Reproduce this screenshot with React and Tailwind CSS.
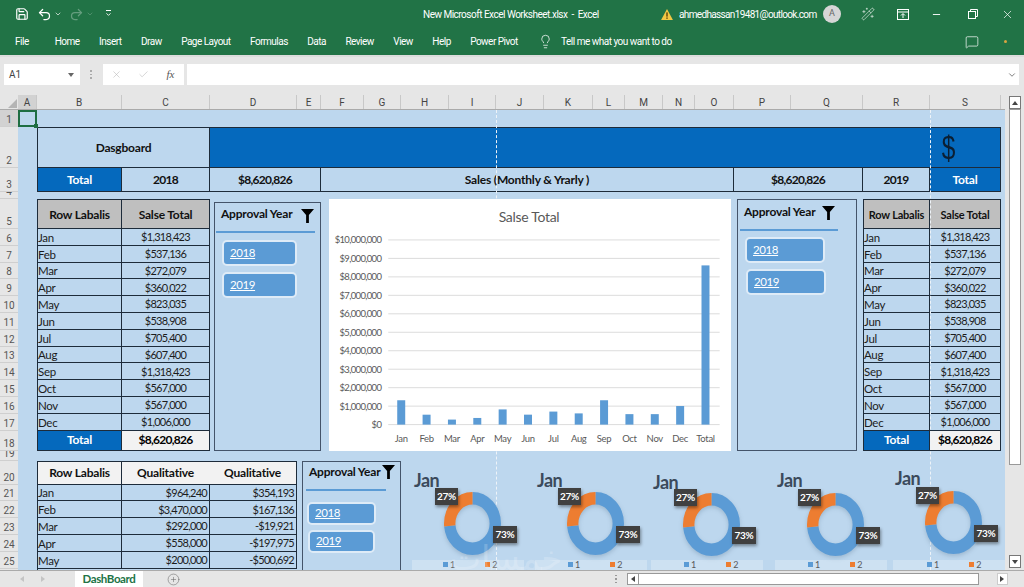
import React from 'react';
import { Save, Undo2, Redo2, ChevronDown, X, Check, Lightbulb, MessageSquare, Minus, CirclePlus, WandSparkles } from 'lucide-react';

const colHeaders = [
  { n: 'A', w: 'w-[19px]', active: true },
  { n: 'B', w: 'w-[85px]' },
  { n: 'C', w: 'w-[88px]' },
  { n: 'D', w: 'w-[87px]' },
  { n: 'E', w: 'w-[24px]' },
  { n: 'F', w: 'w-[43px]' },
  { n: 'G', w: 'w-[37px]' },
  { n: 'H', w: 'w-[48px]' },
  { n: 'I', w: 'w-[47px]' },
  { n: 'J', w: 'w-[48px]' },
  { n: 'K', w: 'w-[49px]' },
  { n: 'L', w: 'w-[32px]' },
  { n: 'M', w: 'w-[38px]' },
  { n: 'N', w: 'w-[32px]' },
  { n: 'O', w: 'w-[39px]' },
  { n: 'P', w: 'w-[57px]' },
  { n: 'Q', w: 'w-[72px]' },
  { n: 'R', w: 'w-[67px]' },
  { n: 'S', w: 'w-[71px]' },
];

const rowHeaders = [
  { n: 1, h: 'h-[17px]', active: true },
  { n: 2, h: 'h-[41px]' },
  { n: 3, h: 'h-[24px]' },
  { n: 4, h: 'h-[7px]' },
  { n: 5, h: 'h-[30px]' },
  ...[6, 7, 8, 9, 10, 11, 12, 13, 14, 15, 16, 17].map((n) => ({ n, h: 'h-[16.8px]' })),
  { n: 18, h: 'h-[20px]' },
  { n: 19, h: 'h-[10px]' },
  { n: 20, h: 'h-[24px]' },
  ...[21, 22, 23, 24, 25].map((n) => ({ n, h: 'h-[16.8px]' })),
];

const sales = [
  ['Jan', '$1,318,423', 1318423],
  ['Feb', '$537,136', 537136],
  ['Mar', '$272,079', 272079],
  ['Apr', '$360,022', 360022],
  ['May', '$823,035', 823035],
  ['Jun', '$538,908', 538908],
  ['Jul', '$705,400', 705400],
  ['Aug', '$607,400', 607400],
  ['Sep', '$1,318,423', 1318423],
  ['Oct', '$567,000', 567000],
  ['Nov', '$567,000', 567000],
  ['Dec', '$1,006,000', 1006000],
];

const qualitative = [
  ['Jan', '$964,240', '$354,193'],
  ['Feb', '$3,470,000', '$167,136'],
  ['Mar', '$292,000', '-$19,921'],
  ['Apr', '$558,000', '-$197,975'],
  ['May', '$200,000', '-$500,692'],
];

const donuts = [
  { ml: 'ml-[11px]', title: 'mt-[9px]', top: 'mt-[2px]', legend: 'pl-[31px]' },
  { ml: 'ml-[11px]', title: 'mt-[9px]', top: 'mt-[2px]', legend: 'pl-[33px]' },
  { ml: 'ml-[4px]', title: 'mt-[11px]', top: 'mt-[1px]', legend: 'pl-[33px]' },
  { ml: 'ml-[12px]', title: 'mt-[9px]', top: 'mt-[3px]', legend: 'pl-[33px]' },
  { ml: 'ml-[6px]', title: 'mt-[7px]', top: 'mt-[3px]', legend: 'pl-[34px]' },
];

const cellBorder = 'border-b-[1.5px] border-r-[1.5px] border-[#1d2b3a]';
const monthFont = "pt-px font-['Lato'] text-[11.5px] tracking-[-0.3px] text-[#1c1c1c]";
const numFont = "pt-px font-['Lato'] text-[11px] tracking-[-0.72px] text-[#1c1c1c]";
const headFont = "font-['Lato'] font-bold text-[12px] tracking-[-0.2px] text-[#111]";
const headNum = "font-['Lato'] font-bold text-[12px] tracking-[-0.75px] text-[#111]";

function Funnel({ className }) {
  return (
    <svg viewBox="0 0 14 15" className={className}>
      <polygon points="0,0 14,0 8.5,6.5 8.5,15 5.5,15 5.5,6.5" fill="#000" />
    </svg>
  );
}

function SlicerButton({ label, className }) {
  return (
    <div className={`flex items-center rounded-[5px] border-2 border-[#deebf7] bg-[#5b9bd5] pl-[6px] font-['Lato'] text-[11.5px] tracking-[-0.4px] text-white underline ${className}`}>
      {label}
    </div>
  );
}

function Donut({ ml, title, top, legend }) {
  return (
    <div className={`flex h-[109px] w-[112px] shrink-0 flex-col ${ml}`}>
      <div className={`ml-[2px] h-[20px] font-['Lato'] text-[18px] font-bold leading-[20px] tracking-[-0.5px] text-[#3b4a5c] ${title}`}>Jan</div>
      <div className={`relative ml-[32px] h-[63px] w-[57px] ${top}`}>
        <svg viewBox="0 0 100 100" preserveAspectRatio="none" className="h-full w-full drop-shadow-[0_2px_2px_rgba(60,90,120,0.25)]">
          <g transform="rotate(-90 50 50)">
            <circle cx="50" cy="50" r="40" fill="none" stroke="#5b9bd5" strokeWidth="20" pathLength="100" strokeDasharray="73 27" />
            <circle cx="50" cy="50" r="40" fill="none" stroke="#ed7d31" strokeWidth="20" pathLength="100" strokeDasharray="27 73" strokeDashoffset="-73" />
          </g>
        </svg>
        <div className="absolute left-[-9px] top-[-4px] flex h-[17px] w-[23px] items-center justify-center bg-[#404040] font-['Lato'] text-[10px] font-bold tracking-[-0.3px] text-white shadow-[1px_2px_3px_rgba(0,0,0,0.4)]">27%</div>
        <div className="absolute left-[49px] top-[34px] flex h-[17px] w-[24px] items-center justify-center bg-[#404040] font-['Lato'] text-[10px] font-bold tracking-[-0.3px] text-white shadow-[1px_2px_3px_rgba(0,0,0,0.4)]">73%</div>
      </div>
      <div className={`mt-auto flex h-[10px] items-center bg-white/25 font-['Lato'] text-[9px] text-[#595959] ${legend}`}>
        <span className="h-[5px] w-[5px] bg-[#5b9bd5]" />
        <span className="ml-[2px]">1</span>
        <span className="ml-[30px] h-[5px] w-[5px] bg-[#ed7d31]" />
        <span className="ml-[2px]">2</span>
      </div>
    </div>
  );
}

function SalesChart() {
  const x0 = 59;
  const yOf = (v) => 226 - (v / 10000000) * 185;
  const bars = [...sales, ['Total', '', 8620826]];
  return (
    <svg viewBox="0 0 402 252" className="h-full w-full" fontFamily="Lato">
      <text x="200" y="23" textAnchor="middle" fontSize="14" fill="#595959" letterSpacing="-0.3">Salse Total</text>
      {[10, 9, 8, 7, 6, 5, 4, 3, 2, 1, 0].map((m) => (
        <g key={m}>
          <line x1={x0} x2="391" y1={yOf(m * 1000000)} y2={yOf(m * 1000000)} stroke="#dcdcdc" />
          <text x="52" y={yOf(m * 1000000) + 3.5} textAnchor="end" fontSize="9.5" fill="#595959" letterSpacing="-0.65">
            {m === 0 ? '$0' : `$${m === 10 ? '10' : m},000,000`}
          </text>
        </g>
      ))}
      {bars.map(([label, , v], i) => (
        <g key={label}>
          <rect x={68 + i * 25.4} y={yOf(v)} width="8" height={226 - yOf(v)} fill="#5b9bd5" />
          <text x={72 + i * 25.4} y="243" textAnchor="middle" fontSize="9.5" fill="#595959" letterSpacing="-0.3">{label}</text>
        </g>
      ))}
    </svg>
  );
}

export default function App() {
  return (
    <div className="flex h-[587px] w-[1024px] flex-col overflow-hidden whitespace-nowrap bg-[#e6e6e6] font-['Roboto',sans-serif]">
      {/* title bar + ribbon tabs */}
      <div className="h-[55px] shrink-0 bg-[#217346] text-white">
        <div className="flex h-[28px] items-center text-[10px]">
          <div className="flex w-[423px] shrink-0 items-center">
            <Save size={14} className="ml-[15px]" />
            <Undo2 size={15} className="ml-[8px]" />
            <ChevronDown size={8} className="ml-[2px]" />
            <Redo2 size={15} className="ml-[7px] opacity-30" />
            <ChevronDown size={8} className="ml-[2px] opacity-30" />
            <div className="ml-[11px] flex flex-col items-center">
              <span className="h-px w-[5px] bg-white" />
              <ChevronDown size={7} strokeWidth={3} />
            </div>
          </div>
          <span className="w-[175px] shrink-0 tracking-[-0.5px]">New Microsoft Excel Worksheet.xlsx&nbsp; -&nbsp; Excel</span>
          <svg viewBox="0 0 14 13" className="ml-[63px] h-[11px] w-[12px] shrink-0">
            <polygon points="7,0 14,13 0,13" fill="#f2c744" />
            <rect x="6.2" y="4" width="1.6" height="5" fill="#5a3b00" />
            <rect x="6.2" y="10" width="1.6" height="1.6" fill="#5a3b00" />
          </svg>
          <span className="ml-[6px] w-[136px] shrink-0 text-[10px] tracking-[-0.65px]">ahmedhassan19481@outlook.com</span>
          <div className="ml-[8px] flex h-[18px] w-[18px] shrink-0 items-center justify-center rounded-full bg-[#d6d6d6] text-[9px] text-[#666]">A</div>
          <WandSparkles size={14} strokeWidth={1} className="ml-[20px] shrink-0" />
          <svg viewBox="0 0 12 11" className="ml-[22px] h-[11px] w-[12px] shrink-0" fill="none" stroke="#fff">
            <rect x="0.5" y="0.5" width="11" height="10" />
            <path d="M0.5 3h11M6 9V5M4 6.5L6 4.5L8 6.5" />
          </svg>
          <Minus size={11} className="ml-[22px] shrink-0" />
          <svg viewBox="0 0 10 10" className="ml-[26px] h-[10px] w-[10px] shrink-0" fill="none" stroke="#fff">
            <rect x="0.5" y="2.5" width="7" height="7" />
            <path d="M2.5 2.5V0.5H9.5V7.5H7.5" />
          </svg>
          <X size={13} strokeWidth={1.3} className="ml-[23px] shrink-0" />
        </div>
        <div className="flex h-[27px] items-center pl-[15px] text-[10px] tracking-[-0.5px]">
          <div className="flex w-[508px] shrink-0 items-center">
            <span className="mr-[26px]">File</span>
            <div className="flex items-center gap-[19.4px]">
              <span>Home</span>
              <span>Insert</span>
              <span>Draw</span>
              <span>Page Layout</span>
              <span>Formulas</span>
              <span>Data</span>
              <span>Review</span>
              <span>View</span>
              <span>Help</span>
              <span>Power Pivot</span>
            </div>
          </div>
          <Lightbulb size={15} strokeWidth={1.2} className="ml-[15px] shrink-0" />
          <span className="ml-[8px] w-[112px] shrink-0">Tell me what you want to do</span>
          <MessageSquare size={14} strokeWidth={1.2} className="ml-[292px] shrink-0" />
          <span className="ml-[25px] h-[3px] w-[3px] shrink-0 rounded-full bg-[#d9a441]" />
        </div>
      </div>

      {/* formula bar */}
      <div className="flex h-[40px] shrink-0 items-start border-t-2 border-[#dcdcdc] pl-[4px] pt-[7px]">
        <div className="flex h-[21px] w-[76px] items-center justify-between bg-white pl-[5px] pr-[6px] text-[10px] text-[#444]">
          A1
          <svg viewBox="0 0 6 4" className="h-[4px] w-[6px]"><polygon points="0,0 6,0 3,4" fill="#666" /></svg>
        </div>
        <div className="ml-[10px] mt-[6px] flex flex-col gap-[2px]">
          <span className="h-[1.5px] w-[1.5px] bg-[#aaa]" />
          <span className="h-[1.5px] w-[1.5px] bg-[#aaa]" />
          <span className="h-[1.5px] w-[1.5px] bg-[#aaa]" />
        </div>
        <div className="ml-[11px] flex h-[21px] w-[81px] items-center bg-white pl-[8px] text-[#b5b5b5]">
          <X size={11} strokeWidth={1.2} />
          <Check size={11} strokeWidth={1.2} className="ml-[16px]" />
          <span className="ml-[18px] font-['Liberation_Serif'] text-[11px] italic text-[#555]">fx</span>
        </div>
        <div className="ml-[3px] flex h-[21px] w-[832px] items-center justify-end bg-white pr-[2px]">
          <ChevronDown size={10} strokeWidth={2} className="text-[#666]" />
        </div>
      </div>

      {/* worksheet */}
      <div className="flex h-[475px] shrink-0">
        <div className="flex w-[1005px] flex-col overflow-hidden">
          <div className="flex h-[15px] shrink-0 border-b border-[#aaa] text-[10px] text-[#444]">
            <div className="flex w-[18px] items-end justify-end pb-px pr-px">
              <svg viewBox="0 0 9 9" className="h-[9px] w-[9px]"><polygon points="9,0 9,9 0,9" fill="#b4b4b4" /></svg>
            </div>
            {colHeaders.map((c) => (
              <div key={c.n} className={`flex items-center justify-center border-r border-[#c8c8c8] ${c.w} ${c.active ? 'bg-[#d2d2d2]' : ''}`}>{c.n}</div>
            ))}
          </div>
          <div className="relative flex min-h-0 flex-1">
            <div className="w-[18px] shrink-0 text-[10px] text-[#555]">
              {rowHeaders.map((r) => (
                <div key={r.n} className={`flex items-end justify-center overflow-hidden border-b border-[#cfcfcf] leading-[12px] ${r.h} ${r.active ? 'bg-[#d2d2d2]' : ''}`}>{r.n}</div>
              ))}
            </div>

            {/* sheet body: one grid whose tracks are the Excel columns and rows */}
            <div className="relative grid h-[460px] w-[987px] grid-cols-[19px_85px_88px_87px_24px_43px_37px_48px_47px_48px_49px_32px_38px_32px_39px_57px_72px_67px_71px_4px] grid-rows-[17px_41px_24px_7px_30px_repeat(12,16.8px)_20px_10px_24px_repeat(6,16.8px)] overflow-hidden bg-[#bdd7ee]">
              <div className="relative col-[1/2] row-[1/2] z-10 border-2 border-[#1f6e43] bg-[#bdd7ee]">
                <span className="absolute -bottom-[3px] -right-[3px] h-[4px] w-[4px] bg-[#1f6e43]" />
              </div>

              {/* page break lines */}
              <div className="pointer-events-none absolute bottom-0 left-[478px] top-0 z-[5] border-l border-dashed border-[#eef3f8]" />
              <div className="pointer-events-none absolute bottom-0 left-[912px] top-0 z-[5] border-l border-dashed border-[#eef3f8]" />

              {/* heading band */}
              <div className="col-[2/20] row-[2/4] grid grid-cols-subgrid grid-rows-subgrid border-l-[1.5px] border-t-[1.5px] border-[#1d2b3a]">
                <div className={`col-[1/3] row-[1/2] flex items-center justify-center ${cellBorder} ${headFont}`}>Dasgboard</div>
                <div className={`col-[3/19] row-[1/2] flex items-start justify-end bg-[#0569bd] ${cellBorder}`}>
                  <div className="flex h-full w-[71px] items-center justify-center pr-[32px] font-['Liberation_Sans'] text-[34px] text-[#0b1f33]">
                    <span className="inline-block scale-x-[0.72]">$</span>
                  </div>
                </div>
                <div className={`row-[2/3] flex items-center justify-center bg-[#0569bd] ${cellBorder} ${headFont} !text-white`}>Total</div>
                <div className={`row-[2/3] flex items-center justify-center ${cellBorder} ${headNum}`}>2018</div>
                <div className={`col-[3/5] row-[2/3] flex items-center justify-center ${cellBorder} ${headNum}`}>$8,620,826</div>
                <div className={`col-[5/15] row-[2/3] flex items-center justify-center ${cellBorder} ${headFont}`}>Sales (Monthly &amp; Yrarly )</div>
                <div className={`col-[15/17] row-[2/3] flex items-center justify-center ${cellBorder} ${headNum}`}>$8,620,826</div>
                <div className={`row-[2/3] flex items-center justify-center ${cellBorder} ${headNum}`}>2019</div>
                <div className={`row-[2/3] flex items-center justify-center bg-[#0569bd] ${cellBorder} ${headFont} !text-white`}>Total</div>
              </div>

              {/* left sales table */}
              <div className="col-[2/4] row-[5/19] grid grid-cols-subgrid grid-rows-subgrid border-l-[1.5px] border-t-[1.5px] border-[#1d2b3a]">
                <div className={`flex items-center justify-center bg-[#bfbfbf] pt-px ${cellBorder} ${headFont}`}>Row Labalis</div>
                <div className={`flex items-center justify-center bg-[#bfbfbf] pt-px ${cellBorder} ${headFont}`}>Salse Total</div>
                {sales.map(([m, v]) => (
                  <React.Fragment key={m}>
                    <div className={`flex items-center ${cellBorder} ${monthFont}`}>{m}</div>
                    <div className={`flex items-center justify-center ${cellBorder} ${numFont}`}>{v}</div>
                  </React.Fragment>
                ))}
                <div className={`flex items-center justify-center bg-[#0569bd] ${cellBorder} ${headFont} !text-white`}>Total</div>
                <div className={`flex items-center justify-center bg-[#f2f2f2] ${cellBorder} ${headNum} !text-black`}>$8,620,826</div>
              </div>

              {/* first slicer */}
              <div className="z-10 col-[4/6] row-[5/19] ml-[4px] mt-[3px] border border-[#44546a] pt-[2px]">
                <div className="flex items-center pl-[6px]">
                  <span className={headFont}>Approval Year</span>
                  <Funnel className="ml-[9px] mt-[3px] h-[14px] w-[13px]" />
                </div>
                <div className="ml-[1px] mt-[8px] h-[2px] w-[99px] bg-[#5b9bd5]" />
                <SlicerButton label="2018" className="ml-[7px] mt-[7px] h-[26px] w-[75px]" />
                <SlicerButton label="2019" className="ml-[7px] mt-[6px] h-[26px] w-[75px]" />
              </div>

              {/* chart */}
              <div className="z-10 col-[6/16] row-[5/19] ml-[8px] mr-[3px] bg-white">
                <SalesChart />
              </div>

              {/* second slicer */}
              <div className="z-10 col-[16/18] row-[5/19] ml-[3px] mr-[6px] border border-[#44546a] pt-[3px]">
                <div className="flex items-center pl-[6px]">
                  <span className={headFont}>Approval Year</span>
                  <Funnel className="ml-[7px] mt-[2px] h-[14px] w-[13px]" />
                </div>
                <div className="ml-[2px] mt-[8px] h-[2px] w-[98px] bg-[#5b9bd5]" />
                <SlicerButton label="2018" className="ml-[7px] mt-[6px] h-[26px] w-[80px]" />
                <SlicerButton label="2019" className="ml-[8px] mt-[6px] h-[26px] w-[80px]" />
              </div>

              {/* right sales table */}
              <div className="col-[18/20] row-[5/19] grid grid-cols-subgrid grid-rows-subgrid border-l-[1.5px] border-t-[1.5px] border-[#1d2b3a]">
                <div className={`flex items-center justify-center bg-[#bfbfbf] pt-[3px] ${cellBorder} ${headFont} !text-[11px]`}>Row Labalis</div>
                <div className={`flex items-center justify-center bg-[#bfbfbf] pt-[3px] ${cellBorder} ${headFont} !text-[11px]`}>Salse Total</div>
                {sales.map(([m, v]) => (
                  <React.Fragment key={m}>
                    <div className={`flex items-center ${cellBorder} ${monthFont}`}>{m}</div>
                    <div className={`flex items-center justify-center ${cellBorder} ${numFont}`}>{v}</div>
                  </React.Fragment>
                ))}
                <div className={`flex items-center justify-center bg-[#0569bd] ${cellBorder} ${headFont} !text-white`}>Total</div>
                <div className={`flex items-center justify-center bg-[#f2f2f2] ${cellBorder} ${headNum} !text-black`}>$8,620,826</div>
              </div>

              {/* lower table */}
              <div className="col-[2/5] row-[20/27] grid grid-cols-subgrid grid-rows-subgrid border-l-[1.5px] border-t-[1.5px] border-[#1d2b3a]">
                <div className={`flex items-center justify-center bg-[#f2f2f2] pt-px ${cellBorder} ${headFont}`}>Row Labalis</div>
                <div className={`col-[2/4] grid grid-cols-2 bg-[#f2f2f2] pt-px ${cellBorder} ${headFont}`}>
                  <span className="flex items-center justify-center">Qualitative</span>
                  <span className="flex items-center justify-center">Qualitative</span>
                </div>
                {qualitative.map(([m, a, b]) => (
                  <React.Fragment key={m}>
                    <div className={`flex items-center ${cellBorder} ${monthFont}`}>{m}</div>
                    <div className={`flex items-center justify-end pr-[2px] ${cellBorder} ${numFont}`}>{a}</div>
                    <div className={`flex items-center justify-end pr-[2px] ${cellBorder} ${numFont}`}>{b}</div>
                  </React.Fragment>
                ))}
              </div>

              {/* third slicer */}
              <div className="z-10 col-[5/8] row-[20/27] ml-[5px] border-x border-t border-[#44546a] pt-px">
                <div className="flex items-center pl-[6px]">
                  <span className={headFont}>Approval Year</span>
                  <Funnel className="ml-[2px] mt-[1px] h-[14px] w-[13px]" />
                </div>
                <div className="ml-[3px] mt-[8px] h-[2px] w-[80px] bg-[#5b9bd5]" />
                <SlicerButton label="2018" className="ml-[4px] mt-[11px] h-[23px] w-[69px]" />
                <SlicerButton label="2019" className="ml-[5px] mt-[5px] h-[23px] w-[67px]" />
              </div>

              {/* donuts */}
              <div className="relative z-10 col-[8/21] row-[20/27] flex items-start">
                {donuts.map((d, i) => (
                  <Donut key={i} {...d} />
                ))}
                <span className="absolute left-[48px] top-[80px] font-['DejaVu_Sans'] text-[34px] leading-[34px] text-white/20">خمسات</span>
              </div>
            </div>
          </div>
        </div>

        {/* vertical scrollbar */}
        <div className="flex w-[19px] flex-col items-center pl-[3px] pr-[2px] pt-px">
          <div className="flex h-[13px] w-[12px] items-center justify-center border border-[#777] bg-white">
            <svg viewBox="0 0 6 4" className="h-[4px] w-[6px]"><polygon points="3,0 6,4 0,4" fill="#444" /></svg>
          </div>
          <div className="h-[356px] w-[12px] border border-[#999] bg-white" />
          <div className="mt-auto mb-[2px] flex h-[13px] w-[12px] items-center justify-center border border-[#777] bg-white">
            <svg viewBox="0 0 6 4" className="h-[4px] w-[6px]"><polygon points="0,0 6,0 3,4" fill="#444" /></svg>
          </div>
        </div>
      </div>

      {/* sheet tabs */}
      <div className="flex min-h-0 flex-1 items-center border-t border-[#aaa]">
        <svg viewBox="0 0 4 6" className="ml-[20px] h-[6px] w-[4px]"><polygon points="4,0 4,6 0,3" fill="#c4c4c4" /></svg>
        <svg viewBox="0 0 4 6" className="ml-[17px] h-[6px] w-[4px]"><polygon points="0,0 0,6 4,3" fill="#c4c4c4" /></svg>
        <div className="ml-[30px] flex h-full w-[68px] items-center justify-center bg-white font-['Lato'] text-[11.5px] font-bold tracking-[-0.4px] text-[#217346]">DashBoard</div>
        <CirclePlus size={13} strokeWidth={1} className="ml-[24px] text-[#666]" />
        <div className="ml-[435px] flex flex-col gap-[2px]">
          <span className="h-[1.5px] w-[1.5px] bg-[#999]" />
          <span className="h-[1.5px] w-[1.5px] bg-[#999]" />
          <span className="h-[1.5px] w-[1.5px] bg-[#999]" />
        </div>
        <div className="ml-[10px] flex h-[12px] w-[352px] items-center border border-[#999] bg-white">
          <svg viewBox="0 0 4 6" className="ml-[3px] h-[6px] w-[4px]"><polygon points="4,0 4,6 0,3" fill="#444" /></svg>
          <span className="ml-[3px] h-full border-l border-[#999]" />
        </div>
        <div className="ml-[18px] flex h-[12px] w-[11px] items-center justify-center border border-[#ccc] bg-white">
          <svg viewBox="0 0 4 6" className="h-[6px] w-[4px]"><polygon points="0,0 0,6 4,3" fill="#444" /></svg>
        </div>
      </div>
    </div>
  );
}
